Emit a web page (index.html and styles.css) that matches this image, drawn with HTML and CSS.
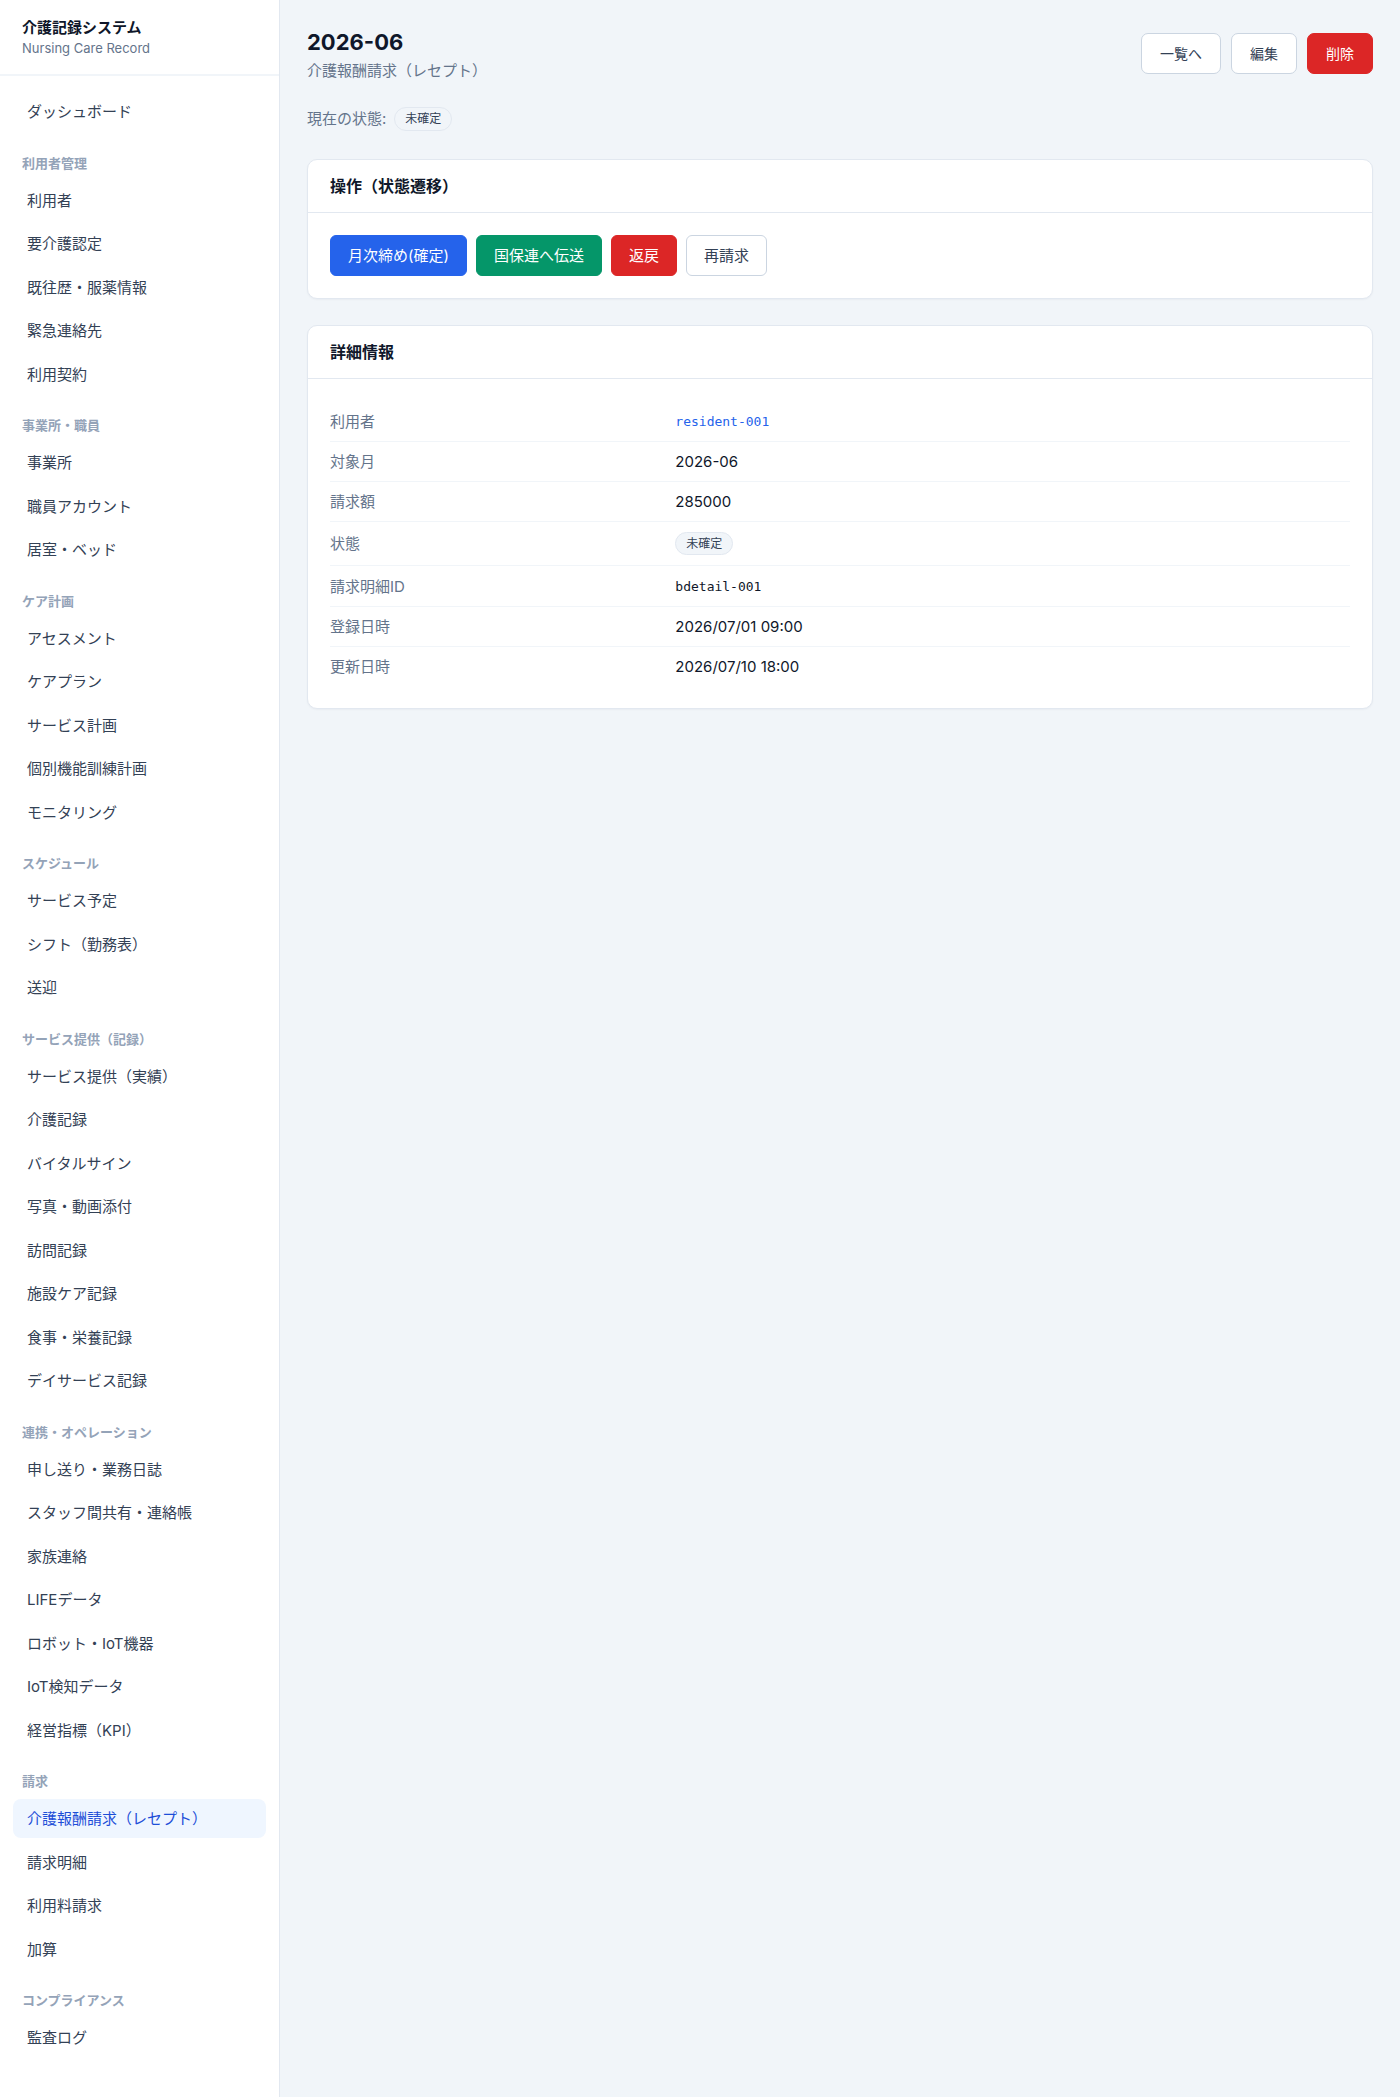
FILE: index.html
```html
<!DOCTYPE html>
<html lang="ja">
<head>
  <meta charset="UTF-8" />
  <meta name="viewport" content="width=device-width, initial-scale=1.0"/>
  <title>介護報酬請求（レセプト） - 介護記録システム</title>
  <link rel="stylesheet" href="styles.css">
</head>
<body>
  <div class="layout">
    <aside class="sidebar">
      <div class="brand">
        <div class="brand-title">介護記録システム</div>
        <div class="brand-sub">Nursing Care Record</div>
      </div>

      <nav class="nav">
        <a class="nav-item" href="#">ダッシュボード</a>

        <div class="nav-label">利用者管理</div>
        <a class="nav-item" href="#">利用者</a>
        <a class="nav-item" href="#">要介護認定</a>
        <a class="nav-item" href="#">既往歴・服薬情報</a>
        <a class="nav-item" href="#">緊急連絡先</a>
        <a class="nav-item" href="#">利用契約</a>

        <div class="nav-label">事業所・職員</div>
        <a class="nav-item" href="#">事業所</a>
        <a class="nav-item" href="#">職員アカウント</a>
        <a class="nav-item" href="#">居室・ベッド</a>

        <div class="nav-label">ケア計画</div>
        <a class="nav-item" href="#">アセスメント</a>
        <a class="nav-item" href="#">ケアプラン</a>
        <a class="nav-item" href="#">サービス計画</a>
        <a class="nav-item" href="#">個別機能訓練計画</a>
        <a class="nav-item" href="#">モニタリング</a>

        <div class="nav-label">スケジュール</div>
        <a class="nav-item" href="#">サービス予定</a>
        <a class="nav-item" href="#">シフト（勤務表）</a>
        <a class="nav-item" href="#">送迎</a>

        <div class="nav-label">サービス提供（記録）</div>
        <a class="nav-item" href="#">サービス提供（実績）</a>
        <a class="nav-item" href="#">介護記録</a>
        <a class="nav-item" href="#">バイタルサイン</a>
        <a class="nav-item" href="#">写真・動画添付</a>
        <a class="nav-item" href="#">訪問記録</a>
        <a class="nav-item" href="#">施設ケア記録</a>
        <a class="nav-item" href="#">食事・栄養記録</a>
        <a class="nav-item" href="#">デイサービス記録</a>

        <div class="nav-label">連携・オペレーション</div>
        <a class="nav-item" href="#">申し送り・業務日誌</a>
        <a class="nav-item" href="#">スタッフ間共有・連絡帳</a>
        <a class="nav-item" href="#">家族連絡</a>
        <a class="nav-item" href="#">LIFEデータ</a>
        <a class="nav-item" href="#">ロボット・IoT機器</a>
        <a class="nav-item" href="#">IoT検知データ</a>
        <a class="nav-item" href="#">経営指標（KPI）</a>

        <div class="nav-label">請求</div>
        <a class="nav-item active" href="#">介護報酬請求（レセプト）</a>
        <a class="nav-item" href="#">請求明細</a>
        <a class="nav-item" href="#">利用料請求</a>
        <a class="nav-item" href="#">加算</a>

        <div class="nav-label">コンプライアンス</div>
        <a class="nav-item" href="#">監査ログ</a>
      </nav>
    </aside>

    <main class="main">
      <div class="page-head">
        <div>
          <h1 class="page-title">2026-06</h1>
          <p class="page-sub">介護報酬請求（レセプト）</p>
        </div>
        <div class="head-actions">
          <a class="btn btn-outline" href="#">一覧へ</a>
          <a class="btn btn-outline" href="#">編集</a>
          <button class="btn btn-danger">削除</button>
        </div>
      </div>

      <div class="status-line">
        現在の状態: <span class="badge">未確定</span>
      </div>

      <section class="card">
        <div class="card-head">操作（状態遷移）</div>
        <div class="card-body actions">
          <button class="btn-sm btn-primary">月次締め(確定)</button>
          <button class="btn-sm btn-success">国保連へ伝送</button>
          <button class="btn-sm btn-danger">返戻</button>
          <button class="btn-sm btn-outline">再請求</button>
        </div>
      </section>

      <section class="card">
        <div class="card-head">詳細情報</div>
        <div class="card-body">
          <div class="detail-row">
            <div class="detail-label">利用者</div>
            <div class="detail-value"><a class="mono link" href="#">resident-001</a></div>
          </div>
          <div class="detail-row">
            <div class="detail-label">対象月</div>
            <div class="detail-value">2026-06</div>
          </div>
          <div class="detail-row">
            <div class="detail-label">請求額</div>
            <div class="detail-value">285000</div>
          </div>
          <div class="detail-row">
            <div class="detail-label">状態</div>
            <div class="detail-value"><span class="badge">未確定</span></div>
          </div>
          <div class="detail-row">
            <div class="detail-label">請求明細ID</div>
            <div class="detail-value"><span class="mono">bdetail-001</span></div>
          </div>
          <div class="detail-row">
            <div class="detail-label">登録日時</div>
            <div class="detail-value">2026/07/01 09:00</div>
          </div>
          <div class="detail-row">
            <div class="detail-label">更新日時</div>
            <div class="detail-value">2026/07/10 18:00</div>
          </div>
        </div>
      </section>
    </main>
  </div>
</body>
</html>
```

FILE: styles.css
```css
:root {
  --bg: #f1f5f9;
  --card: #fff;
  --border: #e2e8f0;
  --line: #f1f5f9;
  --text: #0f172a;
  --text-2: #334155;
  --muted: #64748b;
  --faint: #94a3b8;
  --blue: #2563eb;
  --green: #059669;
  --red: #dc2626;
}

* {
  box-sizing: border-box;
}

body {
  margin: 0;
  font-family: "Inter", "Noto Sans CJK JP", sans-serif;
  font-size: 15px;
  background-color: var(--bg);
  color: var(--text);
}

a {
  text-decoration: none;
  color: inherit;
}

.layout {
  display: flex;
  min-height: 100vh;
}

/* sidebar */
.sidebar {
  width: 280px;
  flex-shrink: 0;
  background: #fff;
  border-right: 1px solid var(--border);
}

.brand {
  padding: 17px 22px 17px;
  border-bottom: 2px solid var(--line);
}

.brand-title {
  font-size: 15px;
  font-weight: 700;
  line-height: 22px;
  color: var(--text);
}

.brand-sub {
  font-size: 13px;
  line-height: 18px;
  color: var(--muted);
}

.nav {
  display: flex;
  flex-direction: column;
  gap: 4.5px;
  padding: 16px 13px 40px;
}

.nav-item {
  display: block;
  padding: 9px 14px;
  line-height: 21px;
  font-size: 15px;
  color: var(--text-2);
  border-radius: 8px;
}

.nav-item.active {
  background: #eff6ff;
  color: #1d4ed8;
}

.nav-label {
  margin: 18px 0 4.5px;
  padding: 0 9px;
  font-size: 13px;
  line-height: 18px;
  font-weight: 600;
  color: var(--faint);
}

/* main */
.main {
  flex: 1;
  padding: 28px 27px;
}

.page-head {
  display: flex;
  justify-content: space-between;
  align-items: flex-start;
}

.page-title {
  margin: 0;
  font-size: 22px;
  line-height: 29px;
  font-weight: 700;
}

.page-sub {
  margin: 3px 0 0;
  font-size: 15px;
  line-height: 22px;
  color: var(--muted);
}

.head-actions {
  display: flex;
  gap: 10px;
  margin-top: 5px;
}

.btn {
  font-family: inherit;
  font-size: 14px;
  line-height: 21px;
  padding: 9px 18px;
  border-radius: 7px;
  border: 1px solid #cbd5e1;
  cursor: pointer;
}

.btn-sm {
  font-family: inherit;
  font-size: 15px;
  line-height: 21px;
  padding: 9px 17px;
  border-radius: 6px;
  border: 1px solid transparent;
  cursor: pointer;
}

.btn-outline {
  background: #fff;
  border-color: #cbd5e1;
  color: var(--text-2);
}

.btn-primary {
  background: var(--blue);
  border-color: var(--blue);
  color: #fff;
}

.btn-success {
  background: var(--green);
  border-color: var(--green);
  color: #fff;
}

.btn-danger {
  background: var(--red);
  border-color: var(--red);
  color: #fff;
}

.status-line {
  display: flex;
  align-items: center;
  gap: 8px;
  margin-top: 25px;
  font-size: 15px;
  line-height: 24px;
  color: var(--muted);
}

.badge {
  display: inline-block;
  padding: 3px 10px;
  font-size: 12px;
  line-height: 16px;
  border-radius: 999px;
  background: var(--line);
  border: 1px solid var(--border);
  color: var(--text-2);
}

.card {
  margin-top: 26px;
  background: var(--card);
  border: 1px solid var(--border);
  border-radius: 10px;
  box-shadow: 0 1px 2px rgba(15, 23, 42, 0.04);
}

.status-line + .card {
  margin-top: 28px;
}

.card-head {
  padding: 14px 22px;
  font-size: 16px;
  line-height: 24px;
  font-weight: 700;
  border-bottom: 1px solid var(--border);
}

.card-body {
  padding: 22px;
}

.actions {
  display: flex;
  gap: 9px;
}

.detail-row {
  display: grid;
  grid-template-columns: 1fr 2fr;
  column-gap: 8px;
  align-items: center;
  padding: 10px 0;
  line-height: 19px;
  border-bottom: 1px solid var(--line);
}

.detail-row:last-child {
  border-bottom: none;
}

.detail-label {
  color: var(--muted);
  font-size: 15px;
}

.detail-value {
  font-size: 15px;
  color: var(--text);
}

.detail-value .badge {
  padding: 2px 10px;
  line-height: 17px;
}

.mono {
  font-family: "DejaVu Sans Mono", "Liberation Mono", monospace;
  font-size: 13px;
}

.link {
  color: var(--blue);
}
```
